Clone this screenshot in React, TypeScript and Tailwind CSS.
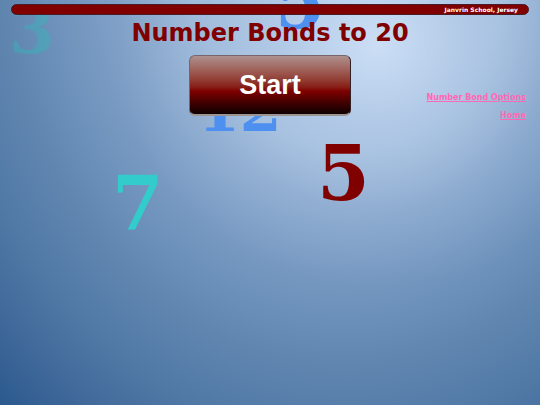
interface FloatingNumber {
  value: number;
  className: string;
}

const floatingNumbers: FloatingNumber[] = [
  { value: 3, className: "left-[9px] top-[-10px] text-[66px] text-[#33b8bc]/40" },
  { value: 5, className: "left-[275px] top-[-37px] text-[72px] text-[#4d90f0]" },
  { value: 12, className: "left-[198px] top-[70px] text-[60px] text-[#4d90f0]" },
  { value: 7, className: "left-[112px] top-[163px] text-[74px] text-[#33cccc]" },
  { value: 5, className: "left-[317px] top-[134px] text-[76px] text-[#800000]" },
];

const links = [
  { label: "Number Bond Options", href: "#options" },
  { label: "Home", href: "#home" },
];

export default function App() {
  return (
    <div className="relative isolate min-h-screen overflow-hidden bg-[radial-gradient(ellipse_48%_60%_at_70%_11%,#dcebffb8_0%,#cfe2fa66_35%,#c0d8f428_68%,#c0d8f400_100%),radial-gradient(ellipse_98%_155%_at_64%_-10%,#a6c1e0_0%,#9ab6d7_30%,#84a3c9_42%,#7094bd_54%,#6187b0_64%,#5079a6_76%,#41699a_86%,#23548a_100%)] font-['Verdana','DejaVu_Sans',sans-serif]">
      {/* Floating numbers */}
      <div aria-hidden="true">
        {floatingNumbers.map((item, idx) => (
          <span
            key={idx}
            className={`absolute -z-10 font-['DejaVu_Serif',serif] leading-[80px] font-bold ${item.className}`}
          >
            {item.value}
          </span>
        ))}
      </div>

      {/* Header */}
      <header className="mx-[11px] mt-1 flex h-[11px] items-center justify-end rounded-full border border-[#4a1c26] bg-[#800000] px-2.5">
        <p className="text-[6px] leading-none font-bold text-white">Janvrin School, Jersey</p>
      </header>

      {/* Content */}
      <main className="flex flex-col items-center">
        <h1 className="mt-1 text-[24px] leading-7 font-bold text-[#800000]">Number Bonds to 20</h1>
        <button
          type="button"
          className="mt-2 h-[61px] w-[162px] rounded-md border border-t-[#77656b] border-r-[#302028] border-b-2 border-b-[#9c9490] border-l-[#77656b] bg-linear-to-b from-[#ad908e] via-[#800000] via-60% to-[#100000] font-['Liberation_Sans',sans-serif] text-[27px] font-bold text-white"
        >
          Start
        </button>
      </main>

      {/* Links */}
      <nav className="-mt-6 mr-3.5 flex flex-col items-end gap-1.5 text-[8px] leading-3 font-bold">
        {links.map((link) => (
          <a key={link.label} href={link.href} className="text-[#ff69b4] underline">
            {link.label}
          </a>
        ))}
      </nav>
    </div>
  );
}
